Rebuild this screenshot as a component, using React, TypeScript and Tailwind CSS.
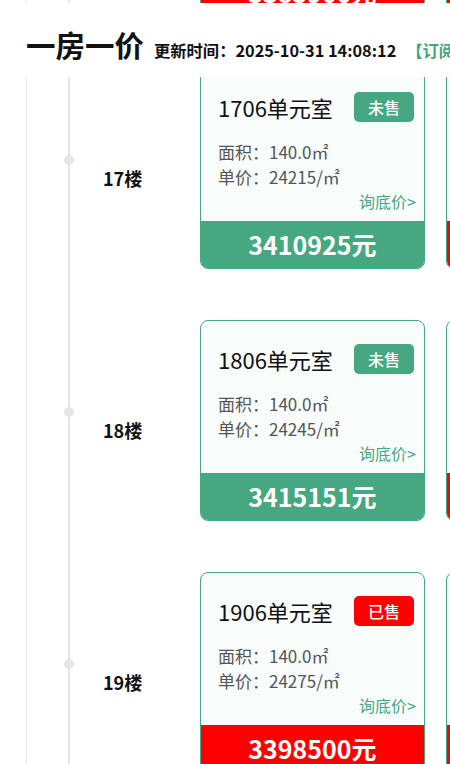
import React from "react";

type Unit = { room: string; sold: boolean; area: string; price: string; total: string };
type Row = { floor: string; units: Unit[] };

const rows: Row[] = [
  {
    floor: "16楼",
    units: [
      { room: "1606单元室", sold: true, area: "140.0", price: "24185", total: "3385900元" },
      { room: "1607单元室", sold: true, area: "140.0", price: "24185", total: "3385900元" },
    ],
  },
  {
    floor: "17楼",
    units: [
      { room: "1706单元室", sold: false, area: "140.0", price: "24215", total: "3410925元" },
      { room: "1707单元室", sold: true, area: "140.0", price: "24215", total: "3390100元" },
    ],
  },
  {
    floor: "18楼",
    units: [
      { room: "1806单元室", sold: false, area: "140.0", price: "24245", total: "3415151元" },
      { room: "1807单元室", sold: true, area: "140.0", price: "24245", total: "3394300元" },
    ],
  },
  {
    floor: "19楼",
    units: [
      { room: "1906单元室", sold: true, area: "140.0", price: "24275", total: "3398500元" },
      { room: "1907单元室", sold: true, area: "140.0", price: "24275", total: "3398500元" },
    ],
  },
  {
    floor: "20楼",
    units: [
      { room: "2006单元室", sold: true, area: "140.0", price: "24305", total: "3402700元" },
      { room: "2007单元室", sold: true, area: "140.0", price: "24305", total: "3402700元" },
    ],
  },
];

function Card({ u }: { u: Unit }) {
  return (
    <div className="w-[225px] h-[201px] shrink-0 border border-[#45a880] rounded-[8px] bg-[#f8fcfb] overflow-hidden flex flex-col">
      <div className="flex-1 flex flex-col">
        <div className="mt-[23px] h-[30px] flex items-center justify-between pl-[17px] pr-[10px]">
          <span className="text-[22px] leading-[30px] text-[#111]">{u.room}</span>
          <span
            className={
              u.sold
                ? "w-[60px] h-[30px] rounded-[5px] bg-[#ff0000] text-white text-[16px] font-medium flex items-center justify-center"
                : "w-[60px] h-[30px] rounded-[5px] bg-[#45a880] text-white text-[16px] font-medium flex items-center justify-center"
            }
          >
            {u.sold ? "已售" : "未售"}
          </span>
        </div>
        <div className="mt-[17px] pl-[17px] text-[17px] leading-[25px] text-[#555]">
          <div>面积：{u.area}㎡</div>
          <div>单价：{u.price}/㎡</div>
        </div>
        <div className="mt-[2px] pr-[8px] text-right text-[16px] leading-[20px] text-[#48a782]">询底价&gt;</div>
      </div>
      <div
        className={
          u.sold
            ? "h-[47px] shrink-0 bg-[#ff0000] flex items-center justify-center text-white text-[25px] font-bold"
            : "h-[47px] shrink-0 bg-[#45a880] flex items-center justify-center text-white text-[25px] font-bold"
        }
      >
        {u.total}
      </div>
    </div>
  );
}

export default function App() {
  return (
    <div className="relative w-[450px] h-[764px] overflow-hidden bg-white font-['Noto_Sans_CJK_SC','Noto_Sans',sans-serif]">
      <div className="mt-[-210px] ml-[26px] border-l border-[#e6e6e6]">
        {rows.map((r) => (
          <div key={r.floor} className="flex h-[252px]">
            <div className="w-[41px] shrink-0" />
            <div className="relative w-[132px] shrink-0 border-l-2 border-[#e6e6e6] flex items-center pl-[33px] pt-[20px]">
              <span className="absolute left-[-6px] top-[113px] w-[10px] h-[10px] rounded-full bg-[#e6e6e6]" />
              <span className="text-[18px] font-bold text-[#111]">{r.floor}</span>
            </div>
            <div className="flex gap-[21px] items-start pt-[26px]">
              {r.units.map((u) => (
                <Card key={u.room} u={u} />
              ))}
            </div>
          </div>
        ))}
      </div>
      <div className="absolute left-0 right-0 top-[3px] h-[74px] z-10 bg-white flex items-baseline pl-[26px] pt-[21px] whitespace-nowrap overflow-hidden">
        <span className="text-[29.5px] font-bold text-[#111] leading-[40px]">一房一价</span>
        <span className="ml-[10px] text-[16.3px] font-bold text-[#111]">更新时间：2025-10-31 14:08:12</span>
        <span className="ml-[10px] text-[16.3px] font-bold text-[#3fa77b]">【订阅】</span>
      </div>
    </div>
  );
}
